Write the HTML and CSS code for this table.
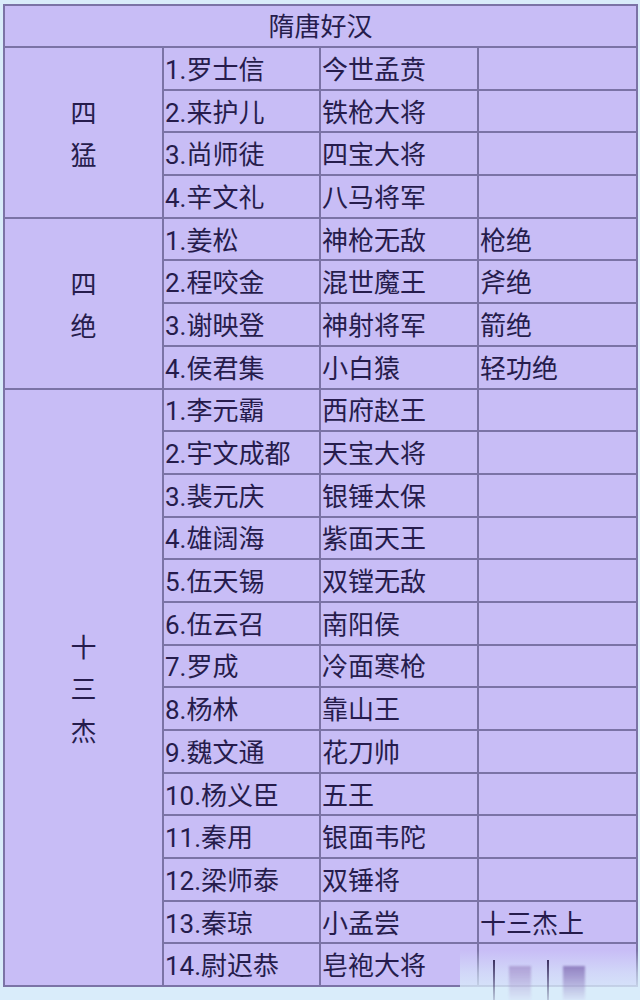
FILE: index.html
```html
<!DOCTYPE html>
<html lang="zh">
<head>
<meta charset="utf-8">
<link rel="stylesheet" href="styles.css">
</head>
<body>
<div class="page">
<table class="grid">
<colgroup><col class="c1"><col class="c2"><col class="c3"><col class="c4"></colgroup>
<tr class="head"><td colspan="4">隋唐好汉</td></tr>
<tr><td class="group" rowspan="4">四<br>猛</td><td>1.罗士信</td><td>今世孟贲</td><td></td></tr>
<tr><td>2.来护儿</td><td>铁枪大将</td><td></td></tr>
<tr><td>3.尚师徒</td><td>四宝大将</td><td></td></tr>
<tr><td>4.辛文礼</td><td>八马将军</td><td></td></tr>
<tr><td class="group" rowspan="4">四<br>绝</td><td>1.姜松</td><td>神枪无敌</td><td>枪绝</td></tr>
<tr><td>2.程咬金</td><td>混世魔王</td><td>斧绝</td></tr>
<tr><td>3.谢映登</td><td>神射将军</td><td>箭绝</td></tr>
<tr><td>4.侯君集</td><td>小白猿</td><td>轻功绝</td></tr>
<tr><td class="group" rowspan="14">十<br>三<br>杰</td><td>1.李元霸</td><td>西府赵王</td><td></td></tr>
<tr><td>2.宇文成都</td><td>天宝大将</td><td></td></tr>
<tr><td>3.裴元庆</td><td>银锤太保</td><td></td></tr>
<tr><td>4.雄阔海</td><td>紫面天王</td><td></td></tr>
<tr><td>5.伍天锡</td><td>双镗无敌</td><td></td></tr>
<tr><td>6.伍云召</td><td>南阳侯</td><td></td></tr>
<tr><td>7.罗成</td><td>冷面寒枪</td><td></td></tr>
<tr><td>8.杨林</td><td>靠山王</td><td></td></tr>
<tr><td>9.魏文通</td><td>花刀帅</td><td></td></tr>
<tr><td>10.杨义臣</td><td>五王</td><td></td></tr>
<tr><td>11.秦用</td><td>银面韦陀</td><td></td></tr>
<tr><td>12.梁师泰</td><td>双锤将</td><td></td></tr>
<tr><td>13.秦琼</td><td>小孟尝</td><td>十三杰上</td></tr>
<tr><td>14.尉迟恭</td><td>皂袍大将</td><td></td></tr>
</table>
<div class="mark">
<span class="bar"></span><span class="blk"></span><span class="bar"></span><span class="blk dark"></span>
</div>
</div>
</body>
</html>
```
FILE: styles.css
```css
html, body {
  margin: 0;
  padding: 0;
  background: #d9ecfa;
}
.page {
  position: relative;
  width: 640px;
  height: 1000px;
  padding: 4px 0 0 3px;
  box-sizing: border-box;
}
.grid {
  border-collapse: collapse;
  width: 633px;
  table-layout: fixed;
  background: #c8bdf6;
  color: #261c4c;
  font-family: Roboto, "Noto Sans CJK SC", sans-serif;
  font-size: 26px;
}
.c1 { width: 159px; }
.c2 { width: 157px; }
.c3 { width: 158px; }
.c4 { width: 159px; }
.grid td {
  border: 2px solid #7b73a6;
  padding: 3px 0 0 1px;
  height: 37.7px;
  line-height: 28px;
  vertical-align: middle;
  white-space: nowrap;
  overflow: hidden;
}
.grid .head td {
  text-align: center;
  font-size: 26px;
  height: 38px;
  padding: 2px 0 0 0;
}
.grid td.group {
  text-align: center;
  padding: 5px 0 0 0;
  line-height: 42px;
}
.mark {
  position: absolute;
  left: 460px;
  top: 950px;
  width: 180px;
  height: 50px;
  display: flex;
  align-items: flex-start;
  background: linear-gradient(to bottom, rgba(217,236,250,0) 0%, rgba(217,236,250,0.55) 45%, #d9ecfa 100%);
}
.mark .bar {
  width: 2px;
  height: 40px;
  margin-top: 10px;
  margin-left: 33px;
  background: linear-gradient(to bottom, #3b3160, rgba(59,49,96,0.2));
}
.mark .blk {
  width: 22px;
  height: 34px;
  margin-top: 16px;
  margin-left: 14px;
  background: linear-gradient(to bottom, rgba(160,140,200,0.7), rgba(220,210,245,0.2));
  filter: blur(1px);
}
.mark .blk.dark {
  background: linear-gradient(to bottom, rgba(130,110,180,0.8), rgba(210,200,240,0.2));
}
.mark .bar + .blk + .bar {
  margin-left: 16px;
}
```
